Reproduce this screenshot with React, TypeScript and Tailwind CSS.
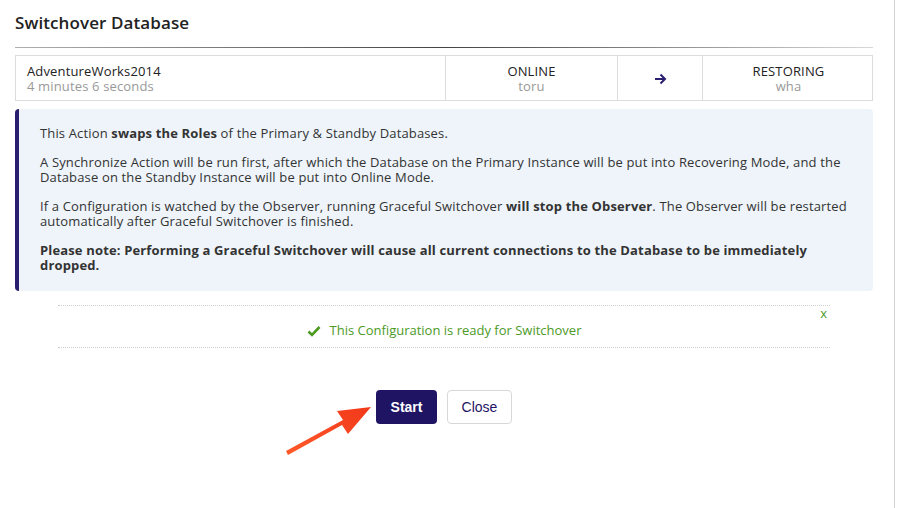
import React from "react";

export default function App() {
  const font = { fontFamily: "'Open Sans', 'Noto Sans', sans-serif" };
  return (
    <div className="relative w-[895px] h-[508px] bg-white border-r border-[#d4d4d4]" style={font}>
      <div className="pl-[15px] pr-[21px]">
        <div className="h-[45px] flex items-center">
          <h1 className="text-[17px] font-semibold text-[#222] tracking-[0.1px]">Switchover Database</h1>
        </div>
        <div className="h-px mt-[2px] bg-gradient-to-r from-[#b0b0b0] via-[#444] to-[#d8d8d8]" />
        <div className="mt-[7px] grid grid-cols-[429px_172px_85px_172px] border border-[#dcdcdc] h-[46px] text-[13px] leading-[15px] tracking-[0.15px]">
          <div className="flex flex-col justify-center pl-[11px] pt-[2px]">
            <div className="text-[#222]">AdventureWorks2014</div>
            <div className="text-[#999]">4 minutes 6 seconds</div>
          </div>
          <div className="flex flex-col justify-center items-center border-l border-[#dcdcdc] pt-[2px]">
            <div className="text-[#222]">ONLINE</div>
            <div className="text-[#999]">toru</div>
          </div>
          <div className="flex items-center justify-center border-l border-[#dcdcdc] pt-[2px]">
            <svg width="13" height="12" viewBox="0 0 13 12">
              <path d="M1 6h10M6.5 1.5L11 6l-4.5 4.5" stroke="#2a1f6e" strokeWidth="2" fill="none" />
            </svg>
          </div>
          <div className="flex flex-col justify-center items-center border-l border-[#dcdcdc] pt-[2px]">
            <div className="text-[#222]">RESTORING</div>
            <div className="text-[#999]">wha</div>
          </div>
        </div>
        <div className="mt-[8px] bg-[#eef4fa] rounded-[4px] border-l-[4px] border-[#2a1f6e] pl-[21px] pr-[20px] pt-[17px] pb-[18px] text-[13px] leading-[15px] tracking-[0.15px] text-[#333] space-y-[14px]">
          <p>This Action <b>swaps the Roles</b> of the Primary &amp; Standby Databases.</p>
          <p>A Synchronize Action will be run first, after which the Database on the Primary Instance will be put into Recovering Mode, and the Database on the Standby Instance will be put into Online Mode.</p>
          <p>If a Configuration is watched by the Observer, running Graceful Switchover <b>will stop the Observer</b>. The Observer will be restarted automatically after Graceful Switchover is finished.</p>
          <p className="font-bold">Please note: Performing a Graceful Switchover will cause all current connections to the Database to be immediately dropped.</p>
        </div>
        <div className="relative mt-[14px] mx-[43px] border-t border-b border-dotted border-[#cfcfcf] h-[43px] flex items-center justify-center">
          <div className="flex items-center gap-[9px] text-[13px] text-[#4c9a1f] pt-[8px]">
            <svg width="14" height="12" viewBox="0 0 14 12">
              <path d="M1.5 6.5l3.5 3.5L12.5 2" stroke="#4c9a1f" strokeWidth="2.6" fill="none" />
            </svg>
            <span>This Configuration is ready for Switchover</span>
          </div>
          <span className="absolute right-[3px] top-[-2px] text-[13px] text-[#4c9a1f]">x</span>
        </div>
        <div className="mt-[42px] flex justify-center gap-[10px]" style={{ fontFamily: "'Liberation Sans', Arial, sans-serif" }}>
          <button className="w-[61px] h-[34px] rounded-[4px] bg-[#1f1463] text-white text-[14px] font-semibold">Start</button>
          <button className="w-[65px] h-[34px] rounded-[4px] bg-white border border-[#d8d8d8] text-[#1f1463] text-[14px]">Close</button>
        </div>
      </div>
      <svg className="absolute left-[280px] top-[396px]" width="100" height="70" viewBox="0 0 100 70">
        <defs>
          <linearGradient id="ag" x1="0" y1="1" x2="1" y2="0">
            <stop offset="0" stopColor="#ff5a2a" />
            <stop offset="1" stopColor="#f2381a" />
          </linearGradient>
        </defs>
        <polygon points="8,59 62,29 68,38 91,11 57,15 63,24 6,55" fill="url(#ag)" />
      </svg>
    </div>
  );
}
